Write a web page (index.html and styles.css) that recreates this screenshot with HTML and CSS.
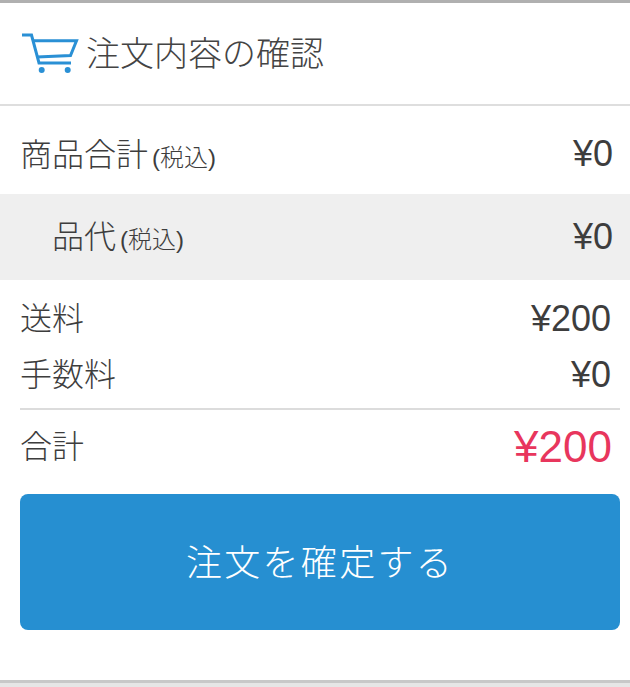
FILE: index.html
```html
<!DOCTYPE html>
<html lang="ja">
<head>
<meta charset="utf-8">
<title>注文内容の確認</title>
<link rel="stylesheet" href="styles.css">
</head>
<body>
<main class="panel">
  <header class="head">
    <svg class="cart" viewBox="0 0 58 42" width="58" height="42" aria-hidden="true">
      <path d="M1 2H10.500L18 30H50" fill="none" stroke="#2a90d5" stroke-width="3"/>
      <path d="M12 7.700H55.500L49.500 22.500L16 24" fill="none" stroke="#2a90d5" stroke-width="3"/>
      <circle cx="20.700" cy="37" r="3" fill="#2a90d5"/>
      <circle cx="46.700" cy="37" r="3" fill="#2a90d5"/>
    </svg>
    <h1 class="title">注文内容の確認</h1>
  </header>
  <div class="row row-main">
    <span class="label">商品合計<small class="tax">(税込)</small></span>
    <span class="amount">¥0</span>
  </div>
  <div class="row row-sub">
    <span class="label">品代<small class="tax">(税込)</small></span>
    <span class="amount">¥0</span>
  </div>
  <section class="fees">
    <div class="fee">
      <span class="label">送料</span>
      <span class="amount">¥200</span>
    </div>
    <div class="fee">
      <span class="label">手数料</span>
      <span class="amount">¥0</span>
    </div>
    <div class="total">
      <span class="label">合計</span>
      <span class="amount amount-total">¥200</span>
    </div>
    <button class="confirm" type="button">注文を確定する</button>
  </section>
</main>
</body>
</html>
```
FILE: styles.css
```css
* { box-sizing: border-box; }
html, body { margin: 0; height: 100%; }
body {
  color: #3d3d3d;
  font-family: "Liberation Sans", "Noto Sans CJK JP", sans-serif;
  height: 687px;
  overflow: hidden;
  background: #e6e6e6;
}
.panel {
  height: 683px;
  background: #fff;
  border-top: 3px solid #b0b0b0;
  border-bottom: 3px solid #c8c8c8;
}
.head {
  display: flex;
  align-items: center;
  gap: 8px;
  height: 103px;
  padding-left: 21px;
  border-bottom: 2px solid #dedede;
}
.cart { flex: none; }
.title {
  margin: 0 0 0 -1px;
  padding-bottom: 4px;
  font-size: 34px;
  font-weight: 300;
  color: #444;
}
.row {
  display: flex;
  justify-content: space-between;
  align-items: center;
  padding-right: 17px;
}
.row-main { height: 88px; padding: 6px 17px 0 20px; }
.row-main .label { padding-bottom: 2px; }
.row-main .amount { padding-top: 2px; }
.row-sub { height: 86px; padding-left: 52px; background: #efefef; }
.row-sub .label { padding-bottom: 6px; }
.label { font-weight: 300; font-size: 32px; }
.tax { margin-left: 4px; font-size: 24px; font-weight: 300; }
.amount { font-size: 36px; }
.fees { padding: 10px 10px 0 20px; display: flex; flex-direction: column; }
.fee {
  display: flex;
  justify-content: space-between;
  align-items: center;
  height: 56px;
  padding-right: 9px;
}
.fee .label { padding-bottom: 4px; }
.fee .amount { padding-top: 2px; }
.total {
  display: flex;
  justify-content: space-between;
  align-items: center;
  width: 600px;
  height: 80px;
  margin-top: 6px;
  padding-right: 8px;
  border-top: 2px solid #dcdcdc;
}
.total .label { padding-bottom: 10px; }
.amount-total { padding-bottom: 4px; font-size: 44px; color: #e8365d; }
.confirm {
  width: 600px;
  height: 136px;
  margin-top: 6px;
  padding-bottom: 5px;
  border: 0;
  border-radius: 8px;
  background: #268fd1;
  color: #fff;
  font: 300 36px "Noto Sans CJK JP", sans-serif;
  letter-spacing: 2.300px;
}
```
